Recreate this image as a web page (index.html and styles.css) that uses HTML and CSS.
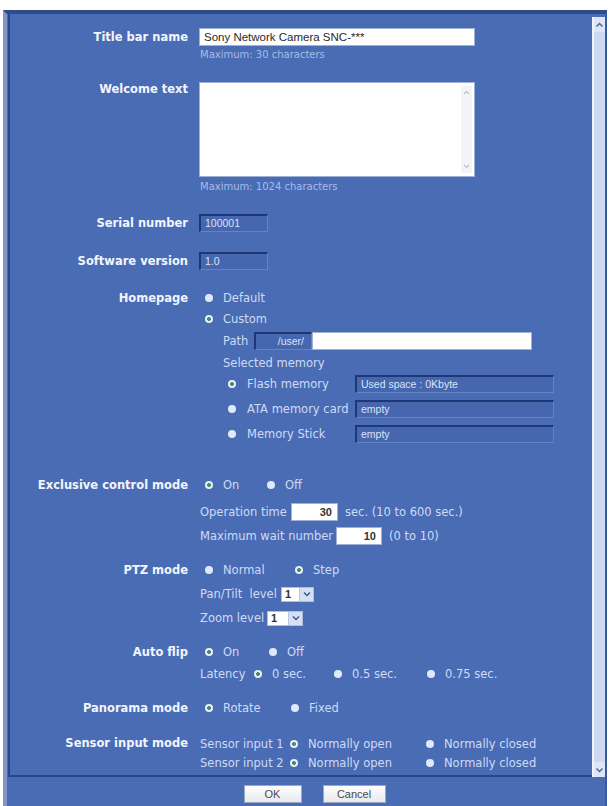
FILE: index.html
```html
<!DOCTYPE html>
<html>
<head>
<meta charset="utf-8">
<title>Camera settings</title>
<link rel="stylesheet" href="styles.css">
</head>
<body>
<div class="frame">
  <div class="panel">
    <div class="content">
      <div class="row">
        <div class="label lh18">Title bar name</div>
        <div class="ctrl">
          <div class="field white w276">Sony Network Camera SNC-***</div>
        </div>
      </div>
      <div class="hint mt2">Maximum: 30 characters</div>

      <div class="row mt20">
        <div class="label lh14">Welcome text</div>
        <div class="ctrl">
          <div class="textarea">
            <div class="ta-bar">
              <svg width="9" height="9" viewBox="0 0 9 9"><polyline points="2,6 4.5,3.5 7,6" fill="none" stroke="#b9bfcc" stroke-width="1.2"/></svg>
              <svg width="9" height="9" viewBox="0 0 9 9"><polyline points="2,3 4.5,5.5 7,3" fill="none" stroke="#b9bfcc" stroke-width="1.2"/></svg>
            </div>
          </div>
        </div>
      </div>
      <div class="hint mt3">Maximum: 1024 characters</div>

      <div class="row mt20">
        <div class="label lh18">Serial number</div>
        <div class="ctrl"><div class="field dark w69">100001</div></div>
      </div>

      <div class="row mt20">
        <div class="label lh18">Software version</div>
        <div class="ctrl"><div class="field dark w69">1.0</div></div>
      </div>

      <div class="row mt20">
        <div class="label lh16">Homepage</div>
        <div class="ctrl">
          <div class="line h16 opts"><span class="opt"><span class="radio"></span>Default</span></div>
          <div class="line h16 opts mt5"><span class="opt"><span class="radio on"></span>Custom</span></div>
          <div class="sub">
            <div class="line h18 mt5">
              <span class="t-path">Path</span>
              <div class="field dark w58 ra">/user/</div>
              <div class="field white w220"></div>
            </div>
            <div class="line h16 mt5">Selected memory</div>
            <div class="line h18 mem mt4">
              <span class="radio on"></span><span class="t-mem">Flash memory</span>
              <div class="field dark w199">Used space : 0Kbyte</div>
            </div>
            <div class="line h18 mem mt7">
              <span class="radio"></span><span class="t-mem">ATA memory card</span>
              <div class="field dark w199">empty</div>
            </div>
            <div class="line h18 mem mt7">
              <span class="radio"></span><span class="t-mem">Memory Stick</span>
              <div class="field dark w199">empty</div>
            </div>
          </div>
        </div>
      </div>

      <div class="row mt34">
        <div class="label lh16">Exclusive control mode</div>
        <div class="ctrl">
          <div class="line h16 opts">
            <span class="opt w62"><span class="radio on"></span>On</span>
            <span class="opt"><span class="radio"></span>Off</span>
          </div>
          <div class="line h18 mt10 pl1">
            <span class="t-op">Operation time</span>
            <div class="field white w47 num">30</div>
            <span class="after">sec. (10 to 600 sec.)</span>
          </div>
          <div class="line h18 mt6 pl1">
            <span class="t-wait">Maximum wait number</span>
            <div class="field white w46 num">10</div>
            <span class="after">(0 to 10)</span>
          </div>
        </div>
      </div>

      <div class="row mt17">
        <div class="label lh16">PTZ mode</div>
        <div class="ctrl">
          <div class="line h16 opts">
            <span class="opt w90"><span class="radio"></span>Normal</span>
            <span class="opt"><span class="radio on"></span>Step</span>
          </div>
          <div class="line h16 mt8 pl1">
            <span class="t-pan">Pan/Tilt&nbsp; level</span>
            <div class="select w33"><span class="sel-val">1</span><span class="sel-btn"><svg width="8" height="6" viewBox="0 0 8 6"><polyline points="1,1.5 4,4.5 7,1.5" fill="none" stroke="#3d5590" stroke-width="1.4"/></svg></span></div>
          </div>
          <div class="line h16 mt8 pl1">
            <span class="t-zoom">Zoom level</span>
            <div class="select w36"><span class="sel-val">1</span><span class="sel-btn"><svg width="8" height="6" viewBox="0 0 8 6"><polyline points="1,1.5 4,4.5 7,1.5" fill="none" stroke="#3d5590" stroke-width="1.4"/></svg></span></div>
          </div>
        </div>
      </div>

      <div class="row mt18">
        <div class="label lh16">Auto flip</div>
        <div class="ctrl">
          <div class="line h16 opts">
            <span class="opt w64"><span class="radio on"></span>On</span>
            <span class="opt"><span class="radio"></span>Off</span>
          </div>
          <div class="line h16 mt6 pl1">
            <span class="t-lat">Latency</span>
            <span class="opt w80"><span class="radio on"></span>0 sec.</span>
            <span class="opt w93"><span class="radio"></span>0.5 sec.</span>
            <span class="opt"><span class="radio"></span>0.75 sec.</span>
          </div>
        </div>
      </div>

      <div class="row mt18">
        <div class="label lh16">Panorama mode</div>
        <div class="ctrl">
          <div class="line h16 opts">
            <span class="opt w86"><span class="radio on"></span>Rotate</span>
            <span class="opt"><span class="radio"></span>Fixed</span>
          </div>
        </div>
      </div>

      <div class="row mt19">
        <div class="label lh17">Sensor input mode</div>
        <div class="ctrl">
          <div class="line h17 pl1">
            <span class="t-sens">Sensor input 1</span>
            <span class="opt w136"><span class="radio on"></span>Normally open</span>
            <span class="opt"><span class="radio"></span>Normally closed</span>
          </div>
          <div class="line h17 mt2 pl1">
            <span class="t-sens">Sensor input 2</span>
            <span class="opt w136"><span class="radio on"></span>Normally open</span>
            <span class="opt"><span class="radio"></span>Normally closed</span>
          </div>
        </div>
      </div>
    </div>
    <div class="scroll">
      <div class="sb-btn">
        <svg width="9" height="8" viewBox="0 0 9 8"><polyline points="1.5,5.5 4.5,2.5 7.5,5.5" fill="none" stroke="#56678f" stroke-width="1.5"/></svg>
      </div>
      <div class="sb-track"></div>
      <div class="sb-btn">
        <svg width="9" height="8" viewBox="0 0 9 8"><polyline points="1.5,2.5 4.5,5.5 7.5,2.5" fill="none" stroke="#56678f" stroke-width="1.5"/></svg>
      </div>
    </div>
  </div>
  <div class="footer">
    <button class="btn w58" type="button">OK</button>
    <button class="btn w63" type="button">Cancel</button>
  </div>
</div>
</body>
</html>
```

FILE: styles.css
```css
* { box-sizing: border-box; }
html, body { margin: 0; padding: 0; background: #ffffff; }
body {
  width: 612px;
  height: 806px;
  overflow: hidden;
  font-family: "DejaVu Sans", Verdana, sans-serif;
}

.frame {
  margin: 10px 5px 0 3px;
  height: 796px;
  background: #4a6cb4;
  border-top: 4px solid #2d4b8d;
  border-left: 4px solid #8195c6;
  border-right: 2px solid #3b5a9c;
  padding-left: 1px;
}

.panel { display: flex; height: 763px; }

.content {
  flex: 1;
  border-left: 2px solid #2b4787;
  border-bottom: 2px solid #2b4787;
  padding-top: 14px;
  color: #cfdbf4;
  font-size: 11.5px;
}

.row { display: flex; align-items: flex-start; }
.label {
  width: 178px;
  flex-shrink: 0;
  text-align: right;
  font-weight: bold;
  color: #f2f5fd;
  font-size: 11.5px;
  white-space: nowrap;
}
.lh14 { line-height: 14px; }
.lh16 { line-height: 16px; }
.lh17 { line-height: 17px; }
.lh18 { line-height: 18px; }

.ctrl { margin-left: 11px; display: flex; flex-direction: column; }

.hint {
  margin-left: 190px;
  font-size: 10px;
  line-height: 14px;
  color: #a7bce6;
}

.mt2 { margin-top: 2px; }
.mt3 { margin-top: 3px; }
.mt4 { margin-top: 4px; }
.mt5 { margin-top: 5px; }
.mt6 { margin-top: 6px; }
.mt7 { margin-top: 7px; }
.mt8 { margin-top: 8px; }
.mt10 { margin-top: 10px; }
.mt17 { margin-top: 17px; }
.mt18 { margin-top: 18px; }
.mt19 { margin-top: 19px; }
.mt20 { margin-top: 20px; }
.mt34 { margin-top: 34px; }

.line { display: flex; align-items: center; white-space: nowrap; }
.h16 { height: 16px; }
.h17 { height: 17px; }
.h18 { height: 18px; }
.pl1 { padding-left: 1px; }
.opts { padding-left: 6px; }

.opt { display: inline-flex; align-items: center; }
.w62 { width: 62px; }
.w64 { width: 64px; }
.w80 { width: 80px; }
.w86 { width: 86px; }
.w90 { width: 90px; }
.w93 { width: 93px; }
.w136 { width: 136px; }

.radio {
  width: 8px;
  height: 8px;
  border-radius: 50%;
  background: #dfe9fa;
  margin-right: 10px;
  flex-shrink: 0;
}
.radio.on {
  background: radial-gradient(circle, #4f8478 0 1.6px, #e4f1ee 2.2px);
}

.field {
  height: 18px;
  flex-shrink: 0;
  white-space: nowrap;
  overflow: hidden;
  font-family: "Liberation Sans", Arial, sans-serif;
}
.field.white {
  background: #ffffff;
  border: 1px solid #9fb1d6;
  color: #2a2a2a;
  font-size: 11.5px;
  line-height: 16px;
  padding: 0 4px;
}
.field.dark {
  background: #4667b0;
  border-top: 2px solid #1f3875;
  border-left: 2px solid #1f3875;
  border-right: 1px solid #6583c1;
  border-bottom: 1px solid #6583c1;
  color: #d9e3f7;
  font-size: 10.5px;
  line-height: 15px;
  padding: 0 4px;
}
.field.ra { text-align: right; padding-right: 7px; }
.field.num { text-align: right; padding-right: 5px; font-weight: bold; color: #333; font-size: 11px; }

.w33 { width: 33px; }
.w36 { width: 36px; }
.w46 { width: 46px; }
.w47 { width: 47px; }
.w58 { width: 58px; }
.w63 { width: 63px; }
.w69 { width: 69px; }
.w199 { width: 199px; }
.w220 { width: 220px; }
.w276 { width: 276px; }

.textarea {
  width: 276px;
  height: 95px;
  background: #ffffff;
  border: 1px solid #9fb1d6;
  display: flex;
  justify-content: flex-end;
  padding: 3px 2px 3px 0;
}
.ta-bar {
  width: 11px;
  background: #f3f4f7;
  display: flex;
  flex-direction: column;
  justify-content: space-between;
  align-items: center;
  padding: 2px 0;
}

.sub { padding-left: 24px; display: flex; flex-direction: column; }
.t-path { width: 31px; }
.mem { padding-left: 5px; }
.mem .radio { margin-right: 11px; }
.t-mem { width: 108px; }

.t-op { width: 91px; }
.t-wait { width: 136px; }
.after { margin-left: 7px; }
.t-pan { width: 81px; }
.t-zoom { width: 67px; }
.t-lat { width: 54px; }
.t-sens { width: 90px; }

.select {
  height: 15px;
  display: flex;
  background: #ffffff;
  border: 1px solid #aebde0;
}
.sel-val {
  flex: 1;
  font-family: "Liberation Sans", Arial, sans-serif;
  font-size: 11px;
  font-weight: bold;
  color: #333;
  line-height: 13px;
  padding-left: 3px;
}
.sel-btn {
  width: 14px;
  background: #d6e0f3;
  border-left: 1px solid #b8c7e6;
  display: flex;
  align-items: center;
  justify-content: center;
}

.scroll {
  width: 13px;
  margin-top: 3px;
  display: flex;
  flex-direction: column;
  background: #cad7f0;
  border-left: 2px solid #eef3fc;
}
.sb-btn {
  height: 15px;
  display: flex;
  align-items: center;
  justify-content: center;
  background: #dde6f6;
}
.sb-track { flex: 1; background: #cdd9f1; }

.footer {
  display: flex;
  justify-content: center;
  gap: 21px;
  padding-top: 8px;
  padding-left: 16px;
}
.btn {
  height: 18px;
  padding: 0;
  margin: 0;
  background: linear-gradient(#ffffff, #e7e9ee);
  border: 1px solid #9ba8c4;
  border-radius: 0;
  font-family: "Liberation Sans", Arial, sans-serif;
  font-size: 11px;
  color: #4a4a4a;
}
```
